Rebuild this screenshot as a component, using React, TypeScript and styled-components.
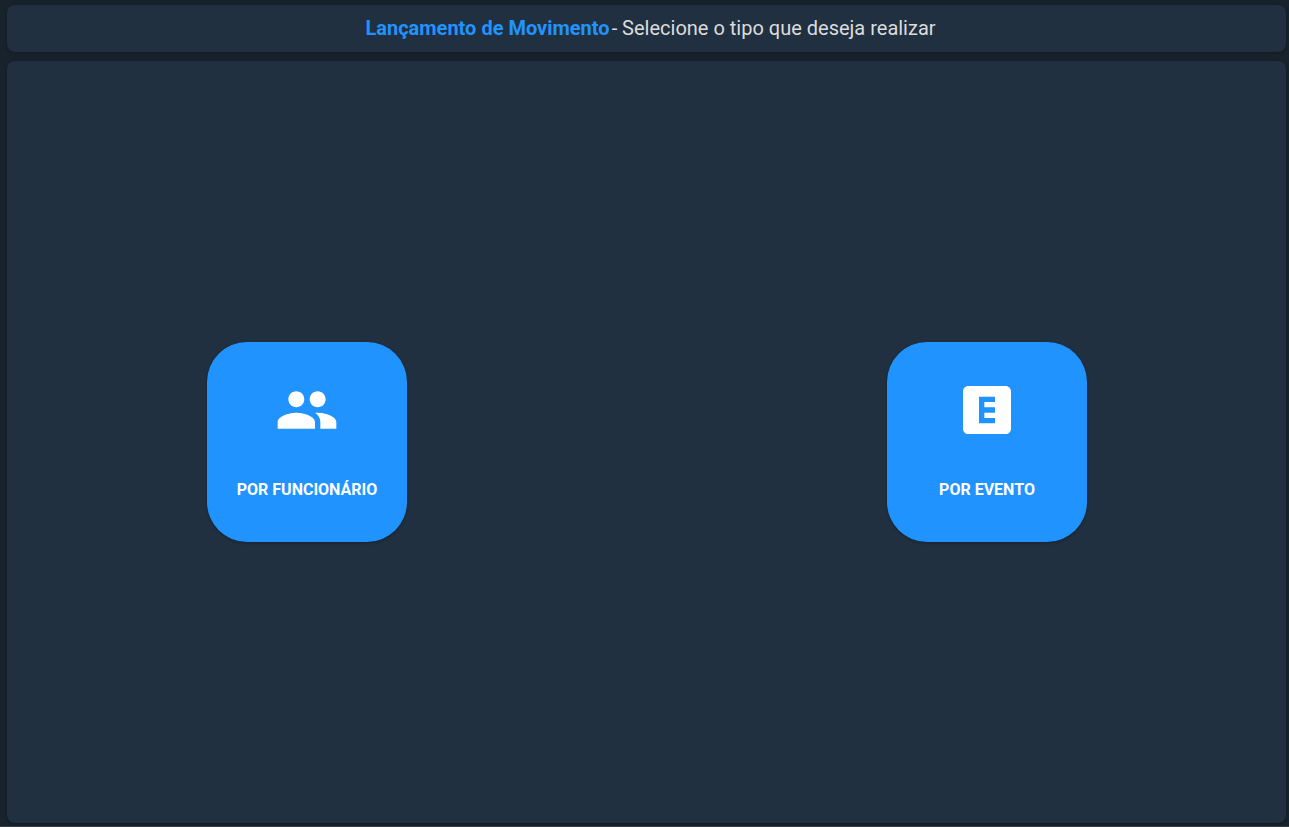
import React from "react";
import styled, { createGlobalStyle } from "styled-components";

const GlobalStyle = createGlobalStyle`
  *, *::before, *::after {
    box-sizing: border-box;
  }

  body {
    margin: 0;
    background: #18222c;
    font-family: Roboto, "Liberation Sans", sans-serif;
  }
`;

const Page = styled.div`
  display: flex;
  flex-direction: column;
  gap: 9px;
  min-height: 100vh;
  padding: 5px 3px 3px 7px;
  border-bottom: 1px solid #3a3f46;
`;

const Panel = styled.section`
  background: #203040;
  border-radius: 8px;
  box-shadow: 0 1px 3px rgba(0, 0, 0, 0.3);
`;

const TitleBar = styled(Panel).attrs({ as: "header" })`
  padding: 8px 0 9px 8px;
`;

const Title = styled.h1`
  display: flex;
  flex-wrap: wrap;
  justify-content: center;
  gap: 2px;
  margin: 0;
  color: #dcdcdc;
  font-size: 20px;
  font-weight: 400;
  line-height: 30px;
`;

const Highlight = styled.strong`
  color: #2193ff;
  font-weight: 700;
`;

const Options = styled(Panel).attrs({ as: "main" })`
  display: flex;
  flex: 1;
  flex-wrap: wrap;
  align-items: center;
  justify-content: space-between;
  gap: 24px;
  padding: 0 199px 0 200px;
`;

const OptionButton = styled.button`
  display: flex;
  flex-direction: column;
  align-items: center;
  gap: 32px;
  width: 200px;
  height: 200px;
  padding: 36px 0 0;
  border: 0;
  border-radius: 40px;
  background: #2193ff;
  box-shadow: 0 1px 3px rgba(0, 0, 0, 0.3);
  color: #fff;
  font-family: inherit;
  font-size: 16px;
  font-weight: 700;
  line-height: 32px;
  text-transform: uppercase;
  cursor: pointer;
`;

const Icon = styled.svg`
  width: 64px;
  height: 64px;
  fill: currentColor;
`;

const options = [
  {
    label: "Por Funcionário",
    path: "M16 11c1.66 0 2.99-1.34 2.99-3S17.66 5 16 5c-1.66 0-3 1.34-3 3s1.34 3 3 3zm-8 0c1.66 0 2.99-1.34 2.99-3S9.66 5 8 5C6.34 5 5 6.34 5 8s1.34 3 3 3zm0 2c-2.33 0-7 1.17-7 3.5V19h14v-2.5c0-2.33-4.67-3.5-7-3.5zm8 0c-.29 0-.62.02-.97.05 1.16.84 1.97 1.97 1.97 3.45V19h6v-2.5c0-2.33-4.67-3.5-7-3.5z",
  },
  {
    label: "Por Evento",
    path: "M19 3H5c-1.1 0-2 .9-2 2v14c0 1.1.9 2 2 2h14c1.1 0 2-.9 2-2V5c0-1.1-.9-2-2-2zm-4 6h-4v2h4v2h-4v2h4v2H9V7h6v2z",
  },
];

export default function App() {
  return (
    <>
      <GlobalStyle />
      <Page>
        <TitleBar>
          <Title>
            <Highlight>Lançamento de Movimento</Highlight>
            <span>- Selecione o tipo que deseja realizar</span>
          </Title>
        </TitleBar>
        <Options>
          {options.map(({ label, path }) => (
            <OptionButton key={label} type="button">
              <Icon viewBox="0 0 24 24" aria-hidden="true">
                <path d={path} />
              </Icon>
              <span>{label}</span>
            </OptionButton>
          ))}
        </Options>
      </Page>
    </>
  );
}
